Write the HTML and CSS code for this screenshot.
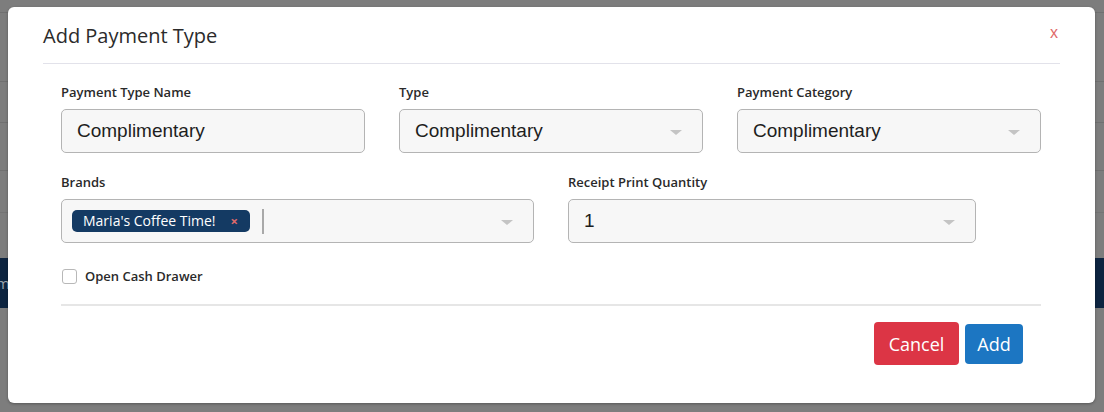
FILE: index.html
```html
<!DOCTYPE html>
<html lang="en">
<head>
    <meta charset="UTF-8">
    <title>Add Payment Type</title>
    <link rel="stylesheet" href="styles.css">
</head>
<body>
    <div class="page">
        <div class="row r1"></div>
        <div class="row r2"></div>
        <div class="row r3"></div>
        <div class="row r4"></div>
        <div class="row r5"></div>
        <div class="band">m</div>
    </div>

    <div class="modal">
        <div class="modal-header">
            <h2>Add Payment Type</h2>
            <span class="close">x</span>
        </div>

        <div class="modal-body">
            <div class="fields three">
                <div class="field">
                    <label>Payment Type Name</label>
                    <div class="control">Complimentary</div>
                </div>
                <div class="field">
                    <label>Type</label>
                    <div class="control select">Complimentary <span class="caret"></span></div>
                </div>
                <div class="field">
                    <label>Payment Category</label>
                    <div class="control select">Complimentary <span class="caret"></span></div>
                </div>
            </div>

            <div class="fields two">
                <div class="field brands">
                    <label>Brands</label>
                    <div class="control select multi">
                        <span class="tag">Maria's Coffee Time! <span class="tag-x">×</span></span>
                        <span class="cursor"></span>
                        <span class="caret"></span>
                    </div>
                </div>
                <div class="field qty">
                    <label>Receipt Print Quantity</label>
                    <div class="control select">1 <span class="caret"></span></div>
                </div>
            </div>

            <div class="check">
                <span class="box"></span>
                <span>Open Cash Drawer</span>
            </div>
        </div>

        <div class="modal-footer">
            <button class="btn cancel">Cancel</button>
            <button class="btn add">Add</button>
        </div>
    </div>
</body>
</html>
```

FILE: styles.css
```css
/* page behind the overlay */
body {
    margin: 0;
    height: 412px;
    overflow: hidden;
    background: #7d7d7d;
    font-family: 'Open Sans', sans-serif;
    color: #333;
}

.page {
    padding-top: 12px;
}

.row {
    border-top: 1px solid #707070;
}

.r1 { height: 68px; }
.r2 { height: 40px; }
.r3 { height: 47px; }
.r4 { height: 41px; }
.r5 { height: 45px; border-top-color: #747474; }

.band {
    height: 50px;
    background: #0d2440;
    color: #9aa3ad;
    font-size: 15px;
    line-height: 50px;
    padding-left: 1px;
    text-indent: -5px;
}

/* modal */
.modal {
    position: absolute;
    top: 7px;
    left: 8px;
    width: 1087px;
    height: 396px;
    background: #fff;
    border-radius: 6px;
    box-shadow: 0 1px 3px rgba(0, 0, 0, 0.3);
    box-sizing: border-box;
}

.modal-header {
    display: flex;
    justify-content: space-between;
    align-items: center;
    margin: 0 35px;
    height: 56px;
    border-bottom: 1px solid #e2e2ea;
}

.modal-header h2 {
    margin: 0;
    font-size: 20px;
    font-weight: 400;
    color: #2b2b2b;
    padding-top: 1px;
}

.close {
    color: #e06a6a;
    font-family: 'Liberation Sans', sans-serif;
    font-size: 16px;
    margin-right: 2px;
    margin-top: -4px;
}

.modal-body {
    padding: 19px 54px 0 53px;
}

.fields {
    display: flex;
    gap: 34px;
    margin-bottom: 20px;
}

.fields.two {
    margin-bottom: 24px;
}

.three .field {
    width: 304px;
}

.brands { width: 473px; }
.qty { width: 408px; }

label {
    display: block;
    font-size: 13px;
    font-weight: 600;
    color: #2a2a2a;
    line-height: 18px;
    margin-bottom: 8px;
}

.control {
    height: 44px;
    box-sizing: border-box;
    border: 1px solid #b4b4b4;
    border-radius: 5px;
    background: #f7f7f7;
    padding: 0 15px;
    display: flex;
    align-items: center;
    font-family: 'Liberation Sans', Arial, sans-serif;
    font-size: 19px;
    color: #1e1e1e;
}

.select {
    position: relative;
}

.caret {
    position: absolute;
    right: 20px;
    top: 20px;
    border-left: 6px solid transparent;
    border-right: 6px solid transparent;
    border-top: 5px solid #c4c4c4;
}

.multi {
    padding-left: 10px;
    gap: 12px;
}

.tag {
    background: #143a63;
    color: #fff;
    font-family: 'Open Sans', sans-serif;
    font-size: 14px;
    border-radius: 5px;
    height: 22px;
    line-height: 22px;
    padding: 0 12px 0 11px;
    display: flex;
    align-items: center;
    gap: 15px;
}

.tag-x {
    color: #e06a6a;
    font-size: 13px;
    font-weight: 700;
}

.cursor {
    width: 2px;
    height: 25px;
    background: #a9a9a9;
}

.check {
    display: flex;
    align-items: center;
    gap: 8px;
    font-size: 13px;
    font-weight: 600;
    color: #2a2a2a;
    padding-bottom: 19px;
    border-bottom: 2px solid #e6e6e6;
}

.box {
    width: 13px;
    height: 13px;
    border: 1px solid #b8b8b8;
    border-radius: 3px;
    margin-left: 1px;
}

.modal-footer {
    display: flex;
    justify-content: flex-end;
    align-items: center;
    gap: 6px;
    padding: 16px 72px 0 0;
}

.btn {
    border: none;
    color: #fff;
    font-family: 'Open Sans', sans-serif;
    font-size: 18px;
    border-radius: 4px;
    cursor: pointer;
}

.cancel {
    background: #dc3545;
    height: 43px;
    width: 85px;
}

.add {
    background: #1c76c2;
    height: 40px;
    width: 58px;
}
```
